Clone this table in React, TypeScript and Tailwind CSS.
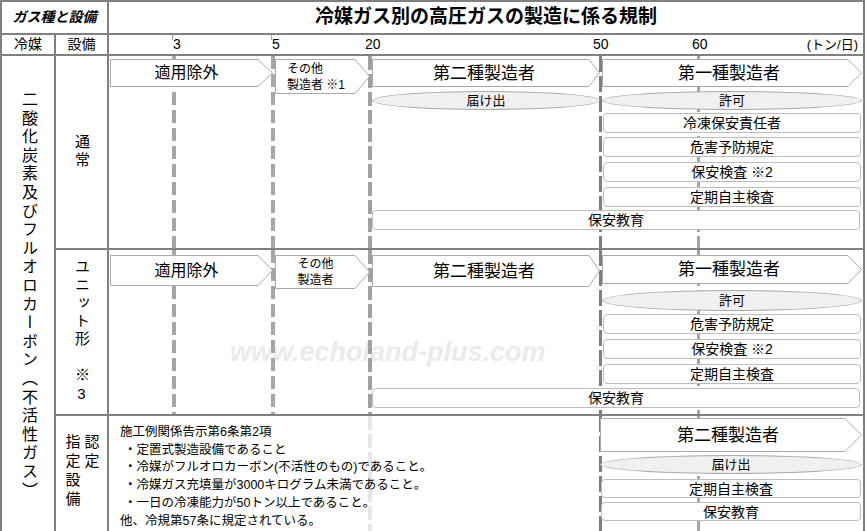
import type { ReactNode } from "react";

type ArrowProps = { w: number; h: number; tip: number; className: string; children: ReactNode };

// pentagon-shaped arrow box, svg drawn behind the label
const Arrow = ({ w, h, tip, className, children }: ArrowProps) => {
  const points = `0.5,0.5 ${w - tip},0.5 ${w - 0.5},${h / 2} ${w - tip},${h - 0.5} 0.5,${h - 0.5}`;
  return (
    <div className={`relative flex items-center ${className}`}>
      <svg width={w} height={h} className="absolute left-0 top-0">
        <polygon points={points} fill="#fff" stroke="#a9a9a9" strokeWidth="1" />
      </svg>
      <div className="relative">{children}</div>
    </div>
  );
};

const Pill = ({ className = "", children }: { className?: string; children: ReactNode }) => (
  <div className={`flex items-center justify-center rounded-[50%] border border-[#a9a9a9] bg-[#f0f0f0] text-[13px] leading-none ${className}`}>
    {children}
  </div>
);

const Box = ({ className = "", children }: { className?: string; children: ReactNode }) => (
  <div className={`flex items-center justify-center rounded-[4px] border border-[#bdbdbd] bg-white text-[14px] leading-none ${className}`}>
    {children}
  </div>
);

const Guides = ({ last = false }: { last?: boolean }) => (
  <>
    {!last && (
      <>
        <div className="absolute top-0 bottom-0 left-[63px] w-[4px] bg-[repeating-linear-gradient(to_bottom,#a6a6a6_0_13px,transparent_13px_18px)]" />
        <div className="absolute top-0 bottom-0 left-[162px] w-[4px] bg-[repeating-linear-gradient(to_bottom,#a6a6a6_0_13px,transparent_13px_18px)]" />
        <div className="absolute top-0 bottom-0 left-[259px] w-[4px] bg-[repeating-linear-gradient(to_bottom,#a0a0a0_0_14px,transparent_14px_18px)]" />
      </>
    )}
    {last && (
      <div className="absolute top-0 bottom-0 left-[259px] w-[4px] bg-[repeating-linear-gradient(to_bottom,#e6e6e6_0_14px,transparent_14px_18px)]" />
    )}
    <div className="absolute top-0 bottom-0 left-[490px] w-[3px] bg-[repeating-linear-gradient(to_bottom,#7f7f7f_0_16px,transparent_16px_20px)]" />
    <div className="absolute top-0 bottom-0 left-[588px] w-[3px] bg-[repeating-linear-gradient(to_bottom,#a6a6a6_0_16px,transparent_16px_20px)]" />
  </>
);

export default function App() {
  return (
    <div className="h-[531px] w-[866px] overflow-hidden bg-white font-['Liberation_Sans','Noto_Sans_CJK_JP',sans-serif] text-black">
      <div className="grid w-[865px] grid-cols-[52px_51px_754px] grid-rows-[31px_19px_192px_164px_120px] gap-[2px] bg-[#808080] p-[2px]">
        {/* header */}
        <div className="col-span-2 flex items-center justify-center bg-white text-[14px] font-bold italic">ガス種と設備</div>
        <div className="flex items-center justify-center bg-white text-[19px] font-bold">冷媒ガス別の高圧ガスの製造に係る規制</div>

        <div className="flex items-center justify-center bg-white text-[14px]">冷媒</div>
        <div className="flex items-center justify-center bg-white text-[14px]">設備</div>
        <div className="relative bg-white text-[14px] leading-[19px]">
          <div className="absolute top-0 left-[63px] h-[5px] w-[4px] bg-[#a6a6a6]" />
          <div className="absolute top-0 left-[162px] h-[5px] w-[4px] bg-[#a6a6a6]" />
          <div className="absolute top-0 left-[259px] h-[4px] w-[4px] bg-[#a0a0a0]" />
          <div className="absolute top-0 left-[490px] h-[5px] w-[3px] bg-[#7f7f7f]" />
          <div className="absolute top-0 left-[588px] h-[5px] w-[3px] bg-[#a6a6a6]" />
          <span className="absolute left-[64px] top-0 bg-white">3</span>
          <span className="absolute left-[163px] top-0 bg-white">5</span>
          <span className="absolute left-[256px] top-0 bg-white">20</span>
          <span className="absolute left-[484px] top-0 bg-white">50</span>
          <span className="absolute left-[583px] top-0 bg-white">60</span>
          <span className="absolute right-[5px] top-0 text-[13px]">(トン/日)</span>
        </div>

        {/* refrigerant, spans all three equipment rows */}
        <div className="col-start-1 row-start-3 row-span-3 flex items-center justify-center bg-white">
          <div className="text-[16px] leading-none tracking-[2.6px] [writing-mode:vertical-rl]">
            二酸化炭素及びフルオロカーボン（不活性ガス）
          </div>
        </div>

        {/* 通常 */}
        <div className="col-start-2 row-start-3 flex items-center justify-center bg-white">
          <div className="text-[15px] leading-none tracking-[3px] [writing-mode:vertical-rl]">通常</div>
        </div>
        <div className="relative col-start-3 row-start-3 bg-white">
          <Guides />
          <div className="relative grid grid-cols-[163px_95px_228px_260px] items-start gap-x-[2px] pl-[1px] pt-[3px]">
            <Arrow w={163} h={28} tip={15} className="h-[28px] w-[163px] justify-center pr-[10px] text-[16px] leading-none">
              適用除外
            </Arrow>
            <Arrow w={95} h={35} tip={15} className="h-[35px] w-[95px] pl-[12px] text-[12px] leading-[16px]">
              その他
              <br />
              製造者 ※1
            </Arrow>
            <div className="flex flex-col">
              <Arrow w={228} h={28} tip={11} className="h-[28px] w-[228px] justify-center pr-[4px] text-[17px] leading-none">
                第二種製造者
              </Arrow>
              <Pill className="mt-[4px] h-[19px]">届け出</Pill>
            </div>
            <div className="flex flex-col">
              <Arrow w={260} h={28} tip={14} className="h-[28px] w-[260px] justify-center pr-[6px] text-[17px] leading-none">
                第一種製造者
              </Arrow>
              <Pill className="mt-[4px] h-[19px]">許可</Pill>
              <Box className="mx-[1px] mt-[3px] h-[20px]">冷凍保安責任者</Box>
              <Box className="mx-[1px] mt-[4px] h-[20px]">危害予防規定</Box>
              <Box className="mx-[1px] mt-[5px] h-[20px]">保安検査 ※2</Box>
              <Box className="mx-[1px] mt-[5px] h-[20px]">定期自主検査</Box>
            </div>
            <Box className="col-span-2 col-start-3 mt-[3px] mr-[2px] h-[20px]">保安教育</Box>
          </div>
        </div>

        {/* ユニット形 */}
        <div className="col-start-2 row-start-4 flex items-center justify-center bg-white">
          <div className="text-[15px] leading-none tracking-[3px] [writing-mode:vertical-rl]">
            ユニット形　※<span className="[text-orientation:upright]">3</span>
          </div>
        </div>
        <div className="relative col-start-3 row-start-4 bg-white">
          {/* watermark sits under the guide lines */}
          <div className="absolute left-[121px] top-[87px] text-[27px] font-bold italic leading-[30px] text-[#ebebeb]">
            www.echoland-plus.com
          </div>
          <Guides />
          <div className="relative grid grid-cols-[163px_95px_228px_260px] items-start gap-x-[2px] pl-[1px] pt-[5px]">
            <Arrow w={163} h={31} tip={15} className="h-[31px] w-[163px] justify-center pr-[10px] text-[16px] leading-none">
              適用除外
            </Arrow>
            <Arrow w={95} h={34} tip={15} className="h-[34px] w-[95px] justify-center pr-[14px] text-center text-[12px] leading-[16px]">
              その他
              <br />
              製造者
            </Arrow>
            <Arrow w={228} h={32} tip={11} className="h-[32px] w-[228px] justify-center pr-[4px] text-[17px] leading-none">
              第二種製造者
            </Arrow>
            <div className="flex flex-col">
              <Arrow w={260} h={29} tip={14} className="h-[29px] w-[260px] justify-center pr-[6px] text-[17px] leading-none">
                第一種製造者
              </Arrow>
              <Pill className="mt-[6px] h-[21px]">許可</Pill>
              <Box className="mx-[1px] mt-[3px] h-[20px]">危害予防規定</Box>
              <Box className="mx-[1px] mt-[5px] h-[20px]">保安検査 ※2</Box>
              <Box className="mx-[1px] mt-[5px] h-[20px]">定期自主検査</Box>
            </div>
            <Box className="col-span-2 col-start-3 mt-[4px] mr-[2px] h-[20px]">保安教育</Box>
          </div>
        </div>

        {/* 認定指定設備 */}
        <div className="col-start-2 row-start-5 flex justify-center bg-white pt-[18px]">
          <div className="text-[15px] leading-[19px] tracking-[4px] [writing-mode:vertical-rl]">
            認定
            <br />
            指定設備
          </div>
        </div>
        <div className="relative col-start-3 row-start-5 bg-white">
          <Guides last />
          <div className="relative grid grid-cols-[489px_262px] items-start gap-x-[2px]">
            <div className="pl-[11px] pt-[8px] text-[12.5px] leading-[17.7px]">
              <p>施工例関係告示第6条第2項</p>
              <p className="pl-[4px]">・定置式製造設備であること</p>
              <p className="pl-[4px]">・冷媒がフルオロカーボン(不活性のもの)であること。</p>
              <p className="pl-[4px]">・冷媒ガス充填量が3000キログラム未満であること。</p>
              <p className="pl-[4px]">・一日の冷凍能力が50トン以上であること。</p>
              <p>他、冷規第57条に規定されている。</p>
            </div>
            <div className="flex flex-col pt-[2px]">
              <Arrow w={262} h={34} tip={17} className="h-[34px] w-[262px] justify-center pr-[6px] text-[17px] leading-none">
                第二種製造者
              </Arrow>
              <Pill className="mt-[3px] h-[19px]">届け出</Pill>
              <Box className="mx-[1px] mt-[5px] h-[19px]">定期自主検査</Box>
              <Box className="mx-[1px] mt-[4px] h-[19px]">保安教育</Box>
            </div>
          </div>
        </div>
      </div>
    </div>
  );
}
